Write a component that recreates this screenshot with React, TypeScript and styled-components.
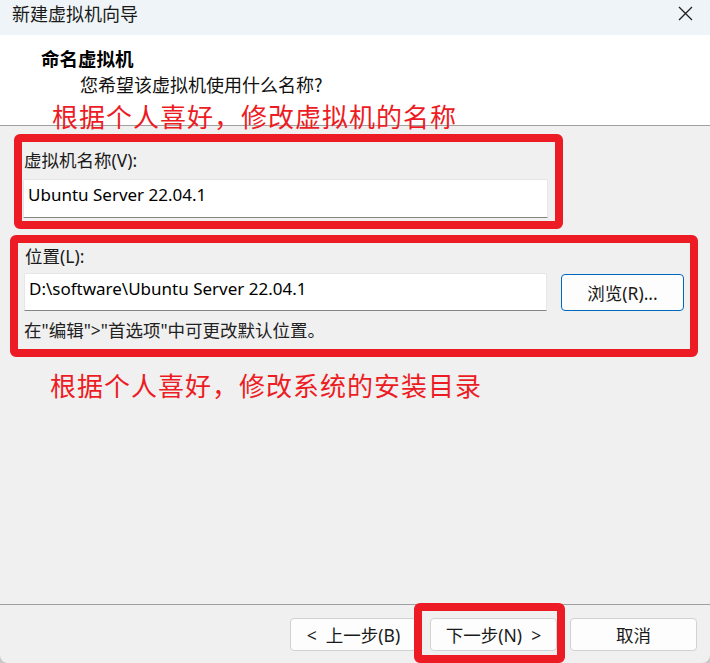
import React from "react";
import styled, { createGlobalStyle } from "styled-components";

const GlobalStyle = createGlobalStyle`
  html, body {
    margin: 0;
    padding: 0;
    background: #c9c9c9;
  }
  * { box-sizing: border-box; }
`;

const SANS = `"Noto Sans", "Noto Sans CJK SC", sans-serif`;
const CJK = `"Noto Sans CJK SC", "Noto Sans", sans-serif`;
const RED = "#ed1c24";

const Window = styled.div`
  width: 710px;
  height: 663px;
  display: flex;
  flex-direction: column;
  background: #f0f0f0;
  border-bottom-left-radius: 8px;
  border-bottom-right-radius: 8px;
  overflow: hidden;
  font-family: ${SANS};
  color: #000;
`;

const TitleBar = styled.div`
  height: 35px;
  flex: none;
  display: flex;
  align-items: flex-start;
  justify-content: space-between;
  padding: 3px 17px 0 12px;
  background: #eef4f7;
`;

const TitleText = styled.div`
  font-family: ${CJK};
  font-size: 18px;
  line-height: 21px;
  color: #1a1a1a;
`;

const CloseIcon = styled.svg`
  width: 15px;
  height: 15px;
  margin-top: 3px;
`;

const Header = styled.div`
  flex: none;
  height: 91px;
  background: #fff;
  border-bottom: 1px solid #a0a0a0;
  padding-top: 12px;
  display: flex;
  flex-direction: column;
`;

const Heading = styled.div`
  font-family: ${CJK};
  font-weight: 700;
  font-size: 18.5px;
  line-height: 22px;
  padding-left: 41px;
`;

const SubHeading = styled.div`
  font-family: ${CJK};
  font-size: 18px;
  line-height: 22px;
  margin-top: 4px;
  padding-left: 80px;
  color: #111;
`;

const Annotation = styled.div<{ $left: number }>`
  font-family: ${CJK};
  font-size: 26px;
  line-height: 28px;
  color: ${RED};
  padding-left: ${(p) => p.$left}px;
  letter-spacing: 1px;
  white-space: nowrap;
`;

const HeaderAnnotation = styled(Annotation)`
  margin-top: 7px;
`;

const Body = styled.div`
  flex: 1;
  display: flex;
  flex-direction: column;
  align-items: flex-start;
`;

const RedFrame = styled.div<{ $left: number; $width: number; $top: number }>`
  margin-top: ${(p) => p.$top}px;
  margin-left: ${(p) => p.$left}px;
  width: ${(p) => p.$width}px;
  border: 8px solid ${RED};
  border-radius: 6px;
  display: flex;
  flex-direction: column;
`;

const NameFrame = styled(RedFrame)`
  padding: 6px 7px 3px 1px;
`;

const LocationFrame = styled(RedFrame)`
  padding: 1px 6px 7px 6px;
`;

const FieldLabel = styled.div`
  font-family: ${SANS};
  font-size: 17.5px;
  line-height: 24px;
  padding-left: 1px;
  color: #1a1a1a;
`;

const TextInput = styled.div<{ $width: number; $height: number }>`
  width: ${(p) => p.$width}px;
  height: ${(p) => p.$height}px;
  background: #fff;
  border: 1px solid #e6e6e6;
  border-bottom: 1px solid #858585;
  border-radius: 2px 2px 0 0;
  font-family: ${SANS};
  font-size: 17px;
  padding: 3px 0 0 4px;
  line-height: 24px;
  color: #000;
  white-space: nowrap;
`;

const NameInput = styled(TextInput)`
  margin-top: 7px;
`;

const InputRow = styled.div`
  display: flex;
  align-items: flex-start;
  gap: 14px;
  margin-top: 5px;
`;

const Button = styled.button<{ $accent?: boolean; $width: number }>`
  width: ${(p) => p.$width}px;
  height: ${(p) => (p.$accent ? 37 : 33)}px;
  margin-top: ${(p) => (p.$accent ? 1 : 0)}px;
  background: #fdfdfd;
  border: 1px solid ${(p) => (p.$accent ? "#0067c0" : "#d2d2d2")};
  border-radius: 4px;
  font-family: ${SANS};
  font-size: 17.5px;
  color: #1a1a1a;
  padding: 0;
  display: flex;
  align-items: center;
  justify-content: center;
  cursor: default;
  white-space: pre;
`;

const Hint = styled.div`
  font-family: ${SANS};
  font-size: 17.5px;
  line-height: 24px;
  margin-top: 7px;
  color: #222;
  white-space: nowrap;
`;

const BodyAnnotation = styled(Annotation)`
  margin-top: 14px;
`;

const Footer = styled.div`
  flex: none;
  height: 59px;
  border-top: 1px solid #a0a0a0;
  display: flex;
  justify-content: flex-end;
  align-items: flex-start;
  gap: 13px;
  padding: 13px 13px 0 0;
`;

const Highlight = styled.div`
  position: relative;
  display: flex;
`;

const HighlightRing = styled.span`
  position: absolute;
  left: -16px;
  right: -8px;
  top: -15px;
  bottom: -12px;
  border: 8px solid ${RED};
  border-radius: 6px;
  pointer-events: none;
`;

export default function App() {
  return (
    <>
      <GlobalStyle />
      <Window>
        <TitleBar>
          <TitleText>新建虚拟机向导</TitleText>
          <CloseIcon viewBox="0 0 15 15">
            <path d="M1 1 L14 14 M14 1 L1 14" stroke="#1f1f1f" strokeWidth="1.3" fill="none" />
          </CloseIcon>
        </TitleBar>
        <Header>
          <Heading>命名虚拟机</Heading>
          <SubHeading>您希望该虚拟机使用什么名称?</SubHeading>
          <HeaderAnnotation $left={52}>根据个人喜好，修改虚拟机的名称</HeaderAnnotation>
        </Header>
        <Body>
          <NameFrame $left={14} $width={549} $top={8}>
            <FieldLabel>虚拟机名称(V):</FieldLabel>
            <NameInput $width={525} $height={39}>Ubuntu Server 22.04.1</NameInput>
          </NameFrame>
          <LocationFrame $left={10} $width={688} $top={6}>
            <FieldLabel>位置(L):</FieldLabel>
            <InputRow>
              <TextInput $width={523} $height={38}>D:\software\Ubuntu Server 22.04.1</TextInput>
              <Button $accent $width={123}>浏览(R)...</Button>
            </InputRow>
            <Hint>在"编辑"&gt;"首选项"中可更改默认位置。</Hint>
          </LocationFrame>
          <BodyAnnotation $left={50}>根据个人喜好，修改系统的安装目录</BodyAnnotation>
        </Body>
        <Footer>
          <Button $width={127}>{"<  上一步(B)"}</Button>
          <Highlight>
            <Button $width={127}>{"下一步(N)  >"}</Button>
            <HighlightRing />
          </Highlight>
          <Button $width={127}>取消</Button>
        </Footer>
      </Window>
    </>
  );
}
